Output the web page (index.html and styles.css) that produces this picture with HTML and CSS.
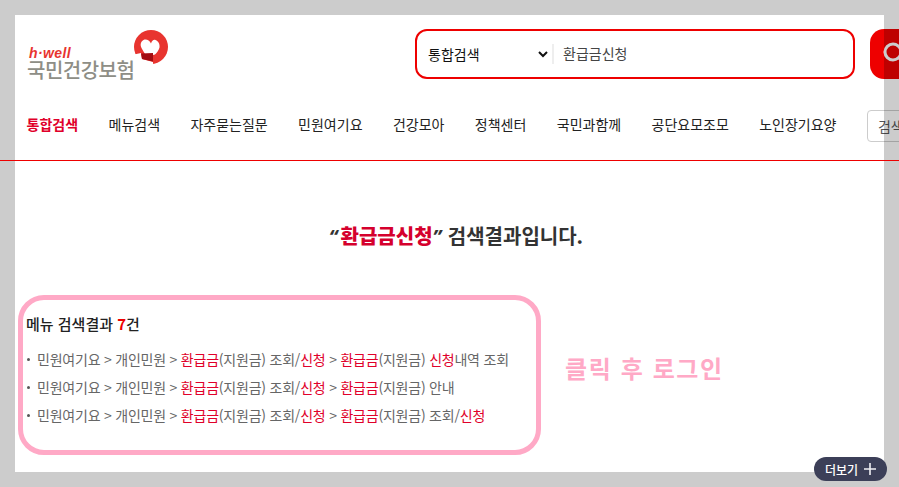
FILE: index.html
```html
<!DOCTYPE html>
<html lang="ko">
<head>
<meta charset="utf-8">
<title>검색결과</title>
<link rel="stylesheet" href="styles.css">
</head>
<body>
<div class="page">
  <header class="top">
    <a class="logo">
      <span class="logo-words">
        <span class="logo-en">h·well</span>
        <span class="logo-ko">국민건강보험</span>
      </span>
      <svg class="logo-mark" width="34" height="34" viewBox="0 0 34 34">
        <circle cx="17" cy="17" r="17" fill="#e8342f"/>
        <path fill="#fff" d="M0 24.500L7 23l1 6 11 3v2H0z"/>
        <path fill="#fff" d="M17 13.500C15.500 10 12 8.800 9.500 10 6.500 11.500 6 15 7.500 18c1.500 3 3 5 3.500 6l6 1.500 4-1c2-2 4-4.500 4.500-7 .5-3-1-6.500-4-7.500-2-.6-3.500.6-4.500 3.500z"/>
        <path fill="#a30d12" d="M7 23.500l12-.5v8.500L8 29z"/>
      </svg>
    </a>
    <form class="search">
      <select class="search-type"><option>통합검색</option></select>
      <input class="search-input" type="text" value="환급금신청">
    </form>
    <button class="search-btn" type="button" aria-label="검색">
      <svg width="26" height="26" viewBox="0 0 26 26"><circle cx="11" cy="11" r="8" fill="none" stroke="#fff" stroke-width="3"/><path d="M17 17l6 6" stroke="#fff" stroke-width="3"/></svg>
    </button>
  </header>
  <nav class="nav">
    <a class="on">통합검색</a>
    <a>메뉴검색</a>
    <a>자주묻는질문</a>
    <a>민원여기요</a>
    <a>건강모아</a>
    <a>정책센터</a>
    <a>국민과함께</a>
    <a>공단요모조모</a>
    <a>노인장기요양</a>
    <input class="nav-input" type="text" placeholder="검색결과 내 재검색">
  </nav>
  <hr class="rule">
  <h1 class="title"><em>“<b>환급금신청</b>”</em> 검색결과입니다.</h1>
  <div class="result-row">
    <section class="box">
      <h2>메뉴 검색결과 <b>7</b>건</h2>
      <ul>
        <li>민원여기요 &gt; 개인민원 &gt; <b>환급금</b>(지원금) 조회/<b>신청</b> &gt; <b>환급금</b>(지원금) <b>신청</b>내역 조회</li>
        <li>민원여기요 &gt; 개인민원 &gt; <b>환급금</b>(지원금) 조회/<b>신청</b> &gt; <b>환급금</b>(지원금) 안내</li>
        <li>민원여기요 &gt; 개인민원 &gt; <b>환급금</b>(지원금) 조회/<b>신청</b> &gt; <b>환급금</b>(지원금) 조회/<b>신청</b></li>
      </ul>
    </section>
    <p class="note">클릭 후 로그인</p>
  </div>
</div>
<div class="frame"></div>
<button class="more" type="button">더보기 <svg width="12" height="12" viewBox="0 0 12 12"><path d="M6 0v12M0 6h12" stroke="#f0f0f4" stroke-width="1.600"/></svg></button>
</body>
</html>
```
FILE: styles.css
```css
* { box-sizing: border-box; }
html, body { margin: 0; height: 487px; overflow: hidden; background: #fff; }
body { font-family: "Noto Sans CJK KR", "Noto Sans", sans-serif; position: relative; color: #222; }
.page { width: 899px; height: 487px; overflow: hidden; padding-top: 15px; }
.top { height: 72px; display: flex; align-items: flex-start; padding: 14px 0 0 27px; }
.logo { display: flex; align-items: flex-start; width: 388px; flex: none; }
.logo-words { display: flex; flex-direction: column; margin-top: 17px; width: 107px; }
.logo-en { font: italic 700 14px/14px "Liberation Sans", sans-serif; color: #e8342f; letter-spacing: .4px; padding-left: 2px; }
.logo-ko { font-size: 20px; line-height: 20px; font-weight: 500; color: #8e8e86; letter-spacing: -.5px; white-space: nowrap; }
.logo-mark { margin-top: 1px; flex: none; }
.search { width: 440px; height: 50px; border: 2px solid #ee0000; border-radius: 12px; display: flex; align-items: center; padding-left: 7px; background: #fff; flex: none; }
.search-type { width: 127px; height: 26px; margin-right: 1px; border: 0; background: #fff; font: 14px "Noto Sans CJK KR", sans-serif; color: #111; padding: 0; outline: 0; flex: none; }
.search-input { flex: 1; height: 20px; border: 0; border-left: 2px solid #eee; padding: 0 0 2px 9px; font: 14px "Noto Sans CJK KR", sans-serif; color: #444; outline: 0; min-width: 0; }
.search-btn { width: 50px; height: 50px; margin-left: 15px; border: 0; border-radius: 14px; background: #ee0000; padding: 0; flex: none; display: flex; align-items: center; justify-content: center; }
.nav { height: 73px; display: flex; align-items: center; padding: 0 0 0 26.600px; white-space: nowrap; }
.nav a { font-size: 14px; color: #222; margin-right: 30.400px; font-weight: 400; }
.nav a.on { color: #e0002a; font-weight: 700; }
.nav-input { width: 160px; height: 32px; margin-top: 5px; border: 1px solid #ccc; border-radius: 4px; padding: 0 10px; font: 14px "Noto Sans CJK KR", sans-serif; flex: none; }
.nav-input::placeholder { color: #555; }
.rule { position: relative; z-index: 2; margin: 0; border: 0; height: 1px; background: #ee0000; }
.title { margin: 61px 0 0; padding-left: 13px; text-align: center; font-size: 20px; line-height: 28px; font-weight: 700; color: #333; }
.title em { font-style: italic; color: #333; font-family: "Noto Sans", sans-serif; margin-right: 1px; }
.title b { font-style: normal; color: #d5002d; font-family: "Noto Sans CJK KR", sans-serif; margin-left: 3px; }
.result-row { display: flex; align-items: center; margin: 44px 0 0 18px; }
.box { width: 523px; height: 160px; border: 5px solid #ffa9c6; border-radius: 26px; padding: 13px 0 0 4px; flex: none; }
.box h2 { margin: 0 0 10px -1px; font-size: 15px; line-height: 22px; font-weight: 500; color: #222; }
.box h2 b { color: #e00; font-weight: 700; }
.box ul { margin: 0; padding: 0; list-style: none; }
.box li { font-size: 14px; line-height: 28px; color: #666; padding-left: 10px; position: relative; letter-spacing: -.22px; white-space: nowrap; }
.box li::before { content: ""; position: absolute; left: 0; top: 13px; width: 3px; height: 3px; border-radius: 50%; background: #555; }
.box li b { font-weight: 400; color: #e0002a; }
.note { margin: 0 0 14px 24px; font-size: 24px; line-height: 30px; font-weight: 700; color: #ffa9c6; letter-spacing: 1.600px; white-space: nowrap; }
.frame { position: absolute; left: 0; top: 0; width: 899px; height: 487px; border: 15px solid rgba(0,0,0,.2); pointer-events: none; z-index: 1; }
.more { position: absolute; z-index: 3; left: 814px; top: 457px; width: 73px; height: 24px; border: 0; border-radius: 12px; background: #3c3f58; color: #fff; font: 500 12px "Noto Sans CJK KR", sans-serif; display: flex; align-items: center; justify-content: center; gap: 6px; padding: 0; }
```
